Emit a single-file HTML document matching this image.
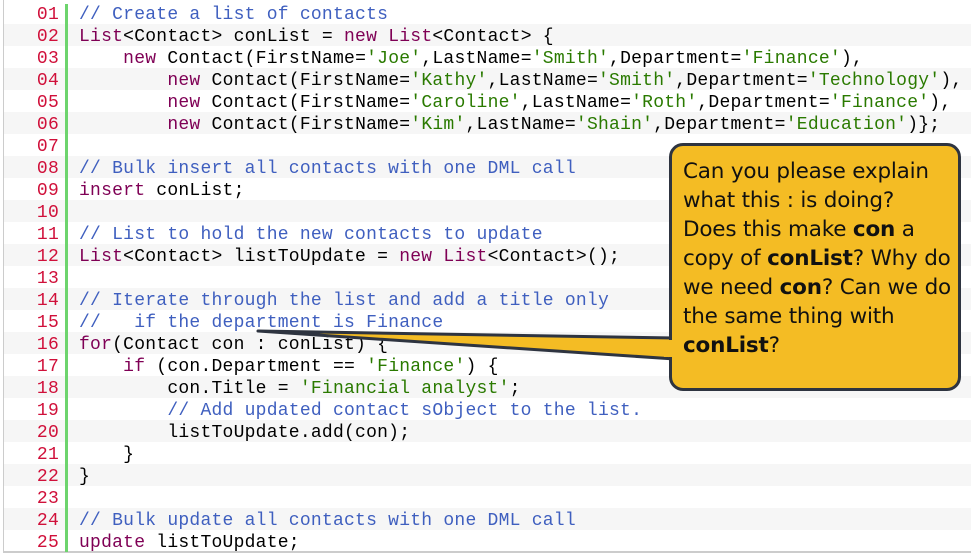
<!DOCTYPE html>
<html><head><meta charset="utf-8"><style>
body{margin:0;width:971px;height:558px;background:#fff;position:relative;overflow:hidden}
.frame{position:absolute;left:3px;top:0;width:968px;height:553px;border-left:1px solid #ccc;border-bottom:2px solid #ccc;box-sizing:border-box}
.row{position:absolute;left:4px;width:967px;height:22px;font-family:"Liberation Mono",monospace;font-size:18px;letter-spacing:0.24px;white-space:pre}
.row:nth-child(even){background:#f6f6f6}
.n{position:absolute;left:0;width:55px;text-align:right;color:#d0103a;line-height:26px}
.c{position:absolute;left:75px;color:#000;line-height:26px}
.k{color:#7f0055}.m{color:#3f5fbf}.s{color:#2a7a00}
.bar{position:absolute;left:65px;top:4px;width:3px;height:548px;background:#6dd46d}
.bubble{position:absolute;left:669px;top:143px;width:292px;height:248px;box-sizing:border-box;background:#f4bc24;border:3px solid #2e3440;border-radius:14px;padding:11px 0 0 11px;font-family:"DejaVu Sans","Liberation Sans",sans-serif;font-size:21.5px;line-height:29px;color:#111;letter-spacing:-0.2px;white-space:nowrap}
</style></head><body>
<div class="frame"></div>
<div id="rows">
<div class="row" style="top:2px"><span class="n">01</span><span class="c"><span class="m">// Create a list of contacts</span></span></div>
<div class="row" style="top:24px"><span class="n">02</span><span class="c"><span class="k">List</span>&lt;Contact&gt; conList = <span class="k">new</span> <span class="k">List</span>&lt;Contact&gt; {</span></div>
<div class="row" style="top:46px"><span class="n">03</span><span class="c">    <span class="k">new</span> Contact(FirstName=<span class="s">'Joe'</span>,LastName=<span class="s">'Smith'</span>,Department=<span class="s">'Finance'</span>),</span></div>
<div class="row" style="top:68px"><span class="n">04</span><span class="c">        <span class="k">new</span> Contact(FirstName=<span class="s">'Kathy'</span>,LastName=<span class="s">'Smith'</span>,Department=<span class="s">'Technology'</span>),</span></div>
<div class="row" style="top:90px"><span class="n">05</span><span class="c">        <span class="k">new</span> Contact(FirstName=<span class="s">'Caroline'</span>,LastName=<span class="s">'Roth'</span>,Department=<span class="s">'Finance'</span>),</span></div>
<div class="row" style="top:112px"><span class="n">06</span><span class="c">        <span class="k">new</span> Contact(FirstName=<span class="s">'Kim'</span>,LastName=<span class="s">'Shain'</span>,Department=<span class="s">'Education'</span>)};</span></div>
<div class="row" style="top:134px"><span class="n">07</span></div>
<div class="row" style="top:156px"><span class="n">08</span><span class="c"><span class="m">// Bulk insert all contacts with one DML call</span></span></div>
<div class="row" style="top:178px"><span class="n">09</span><span class="c"><span class="k">insert</span> conList;</span></div>
<div class="row" style="top:200px"><span class="n">10</span></div>
<div class="row" style="top:222px"><span class="n">11</span><span class="c"><span class="m">// List to hold the new contacts to update</span></span></div>
<div class="row" style="top:244px"><span class="n">12</span><span class="c"><span class="k">List</span>&lt;Contact&gt; listToUpdate = <span class="k">new</span> <span class="k">List</span>&lt;Contact&gt;();</span></div>
<div class="row" style="top:266px"><span class="n">13</span></div>
<div class="row" style="top:288px"><span class="n">14</span><span class="c"><span class="m">// Iterate through the list and add a title only</span></span></div>
<div class="row" style="top:310px"><span class="n">15</span><span class="c"><span class="m">//   if the department is Finance</span></span></div>
<div class="row" style="top:332px"><span class="n">16</span><span class="c"><span class="k">for</span>(Contact con : conList) {</span></div>
<div class="row" style="top:354px"><span class="n">17</span><span class="c">    <span class="k">if</span> (con.Department == <span class="s">'Finance'</span>) {</span></div>
<div class="row" style="top:376px"><span class="n">18</span><span class="c">        con.Title = <span class="s">'Financial analyst'</span>;</span></div>
<div class="row" style="top:398px"><span class="n">19</span><span class="c">        <span class="m">// Add updated contact sObject to the list.</span></span></div>
<div class="row" style="top:420px"><span class="n">20</span><span class="c">        listToUpdate.add(con);</span></div>
<div class="row" style="top:442px"><span class="n">21</span><span class="c">    }</span></div>
<div class="row" style="top:464px"><span class="n">22</span><span class="c">}</span></div>
<div class="row" style="top:486px"><span class="n">23</span></div>
<div class="row" style="top:508px"><span class="n">24</span><span class="c"><span class="m">// Bulk update all contacts with one DML call</span></span></div>
<div class="row" style="top:530px"><span class="n">25</span><span class="c"><span class="k">update</span> listToUpdate;</span></div>
</div>
<div class="bar"></div>
<svg style="position:absolute;left:0;top:0" width="971" height="558"><polygon points="258,331 675,338 675,359" fill="#f4bc24" stroke="#2e3440" stroke-width="3" stroke-linejoin="round"/></svg>
<div class="bubble">Can you please explain<br>what this : is doing?<br>Does this make <b>con</b> a<br>copy of <b>conList</b>? Why do<br>we need <b>con</b>? Can we do<br>the same thing with<br><b>conList</b>?</div>
<svg style="position:absolute;left:0;top:0" width="971" height="558"><polygon points="664,340 674,340 674,357 664,357" fill="#f4bc24"/></svg>
</body></html>
